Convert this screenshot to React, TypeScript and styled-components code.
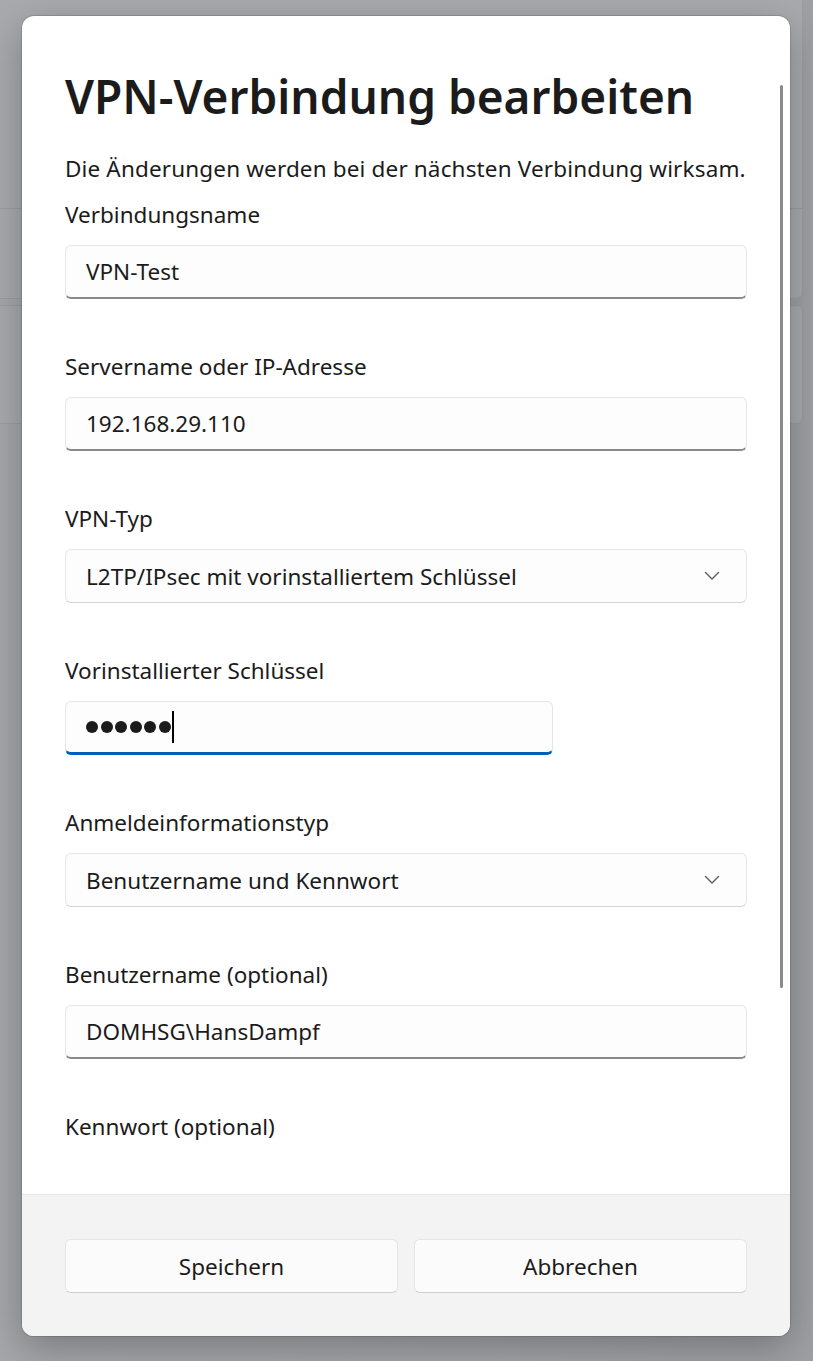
import React from 'react';
import styled, { createGlobalStyle } from 'styled-components';

const GlobalStyle = createGlobalStyle`
  html, body {
    margin: 0;
    padding: 0;
  }
  body {
    font-family: "Noto Sans", "Open Sans", sans-serif;
    background: #a2a3a6;
    color: #1b1b1b;
  }
`;

const Page = styled.div`
  position: relative;
  width: 813px;
  height: 1361px;
  overflow: hidden;
  background: linear-gradient(90deg, #a6a7aa 0%, #a4a5a8 60%, #9fa0a3 100%);
`;

const Behind = styled.div`
  display: flex;
  flex-direction: column;
  gap: 6px;
  width: 803px;
`;

const BehindCard = styled.div<{ $top?: boolean }>`
  display: flex;
  flex-direction: column;
  background: #a9aaad;
  border: 1px solid #9c9da0;
  border-left: none;
  border-top: ${({ $top }) => ($top ? 'none' : '1px solid #9c9da0')};
  border-radius: ${({ $top }) => ($top ? '0 0 6px 0' : '0 6px 6px 0')};
`;

const BehindRow = styled.div<{ $h: number; $divider?: boolean }>`
  height: ${({ $h }) => $h}px;
  border-bottom: ${({ $divider }) => ($divider ? '1px solid #9c9da0' : 'none')};
`;

const Overlay = styled.div`
  position: absolute;
  inset: 0;
  padding: 16px 23px 25px 22px;
  display: flex;
`;

const Dialog = styled.div`
  position: relative;
  flex: 1;
  display: flex;
  flex-direction: column;
  background: #ffffff;
  border-radius: 12px;
  overflow: hidden;
  box-shadow: 0 0 0 1px rgba(0, 0, 0, 0.12), 0 12px 40px rgba(0, 0, 0, 0.28);
`;

const Body = styled.div`
  flex: 1;
  overflow: hidden;
  padding: 0 43px;
`;

const Title = styled.h1`
  margin: 0;
  padding-top: 52px;
  font-size: 46px;
  line-height: 56px;
  font-weight: 600;
  color: #1b1b1b;
  letter-spacing: 0;
`;

const Subtitle = styled.p`
  margin: 30px -20px 16px 0;
  font-size: 22.5px;
  line-height: 30px;
  letter-spacing: 0.15px;
  white-space: nowrap;
`;

const Field = styled.div`
  display: flex;
  flex-direction: column;
  gap: 15px;
  margin-bottom: 53px;
`;

const Label = styled.label`
  font-size: 22.5px;
  line-height: 30px;
  color: #1b1b1b;
`;

const Box = styled.div<{ $focused?: boolean; $width?: number }>`
  box-sizing: border-box;
  height: 54px;
  width: ${({ $width }) => ($width ? `${$width}px` : '100%')};
  display: flex;
  align-items: center;
  padding: 0 20px;
  background: #fdfdfd;
  border: 1px solid #e5e5e5;
  border-bottom: ${({ $focused }) => ($focused ? '3px solid #005fb8' : '2px solid #8a8a8a')};
  border-radius: 6px;
  font-size: 22.5px;
  color: #1b1b1b;
`;

const SelectBox = styled(Box)`
  justify-content: space-between;
  border-bottom: 1px solid #d6d6d6;
  padding-right: 26px;
`;

const Dots = styled.span`
  display: flex;
  align-items: center;
  gap: 2.5px;
`;

const Dot = styled.span`
  width: 12px;
  height: 12px;
  border-radius: 50%;
  background: #1b1b1b;
`;

const Caret = styled.span`
  width: 2px;
  height: 32px;
  background: #000;
  margin-left: 1px;
`;

const Scrollbar = styled.div`
  position: absolute;
  right: 7px;
  top: 69px;
  width: 3px;
  height: 903px;
  border-radius: 2px;
  background: #8a8a8a;
`;

const Footer = styled.div`
  flex: 0 0 142px;
  box-sizing: border-box;
  background: #f3f3f3;
  border-top: 1px solid #e5e5e5;
  padding: 44px 43px 0;
  display: grid;
  grid-template-columns: 1fr 1fr;
  gap: 16px;
  align-items: start;
`;

const Button = styled.button`
  height: 54px;
  background: #fbfbfb;
  border: 1px solid #e5e5e5;
  border-bottom-color: #d0d0d0;
  border-radius: 6px;
  font-family: inherit;
  font-size: 22.5px;
  color: #1b1b1b;
`;

const Chevron = () => (
  <svg width="16" height="10" viewBox="0 0 16 10" fill="none">
    <path d="M1.5 1.5 L8 8 L14.5 1.5" stroke="#5d5d5d" strokeWidth="1.4" strokeLinecap="round" strokeLinejoin="round" />
  </svg>
);

export default function App() {
  return (
    <>
      <GlobalStyle />
      <Page>
        <Behind>
          <BehindCard $top>
            <BehindRow $h={208} $divider />
            <BehindRow $h={89} />
          </BehindCard>
          <BehindCard>
            <BehindRow $h={117} />
          </BehindCard>
        </Behind>
        <Overlay>
          <Dialog>
            <Body>
              <Title>VPN-Verbindung bearbeiten</Title>
              <Subtitle>Die Änderungen werden bei der nächsten Verbindung wirksam.</Subtitle>
              <Field>
                <Label>Verbindungsname</Label>
                <Box>VPN-Test</Box>
              </Field>
              <Field>
                <Label>Servername oder IP-Adresse</Label>
                <Box>192.168.29.110</Box>
              </Field>
              <Field>
                <Label>VPN-Typ</Label>
                <SelectBox>
                  <span>L2TP/IPsec mit vorinstalliertem Schlüssel</span>
                  <Chevron />
                </SelectBox>
              </Field>
              <Field>
                <Label>Vorinstallierter Schlüssel</Label>
                <Box $focused $width={488}>
                  <Dots>
                    {Array.from({ length: 6 }).map((_, i) => (
                      <Dot key={i} />
                    ))}
                  </Dots>
                  <Caret />
                </Box>
              </Field>
              <Field>
                <Label>Anmeldeinformationstyp</Label>
                <SelectBox>
                  <span>Benutzername und Kennwort</span>
                  <Chevron />
                </SelectBox>
              </Field>
              <Field>
                <Label>Benutzername (optional)</Label>
                <Box>DOMHSG\HansDampf</Box>
              </Field>
              <Field>
                <Label>Kennwort (optional)</Label>
              </Field>
            </Body>
            <Scrollbar />
            <Footer>
              <Button>Speichern</Button>
              <Button>Abbrechen</Button>
            </Footer>
          </Dialog>
        </Overlay>
      </Page>
    </>
  );
}
